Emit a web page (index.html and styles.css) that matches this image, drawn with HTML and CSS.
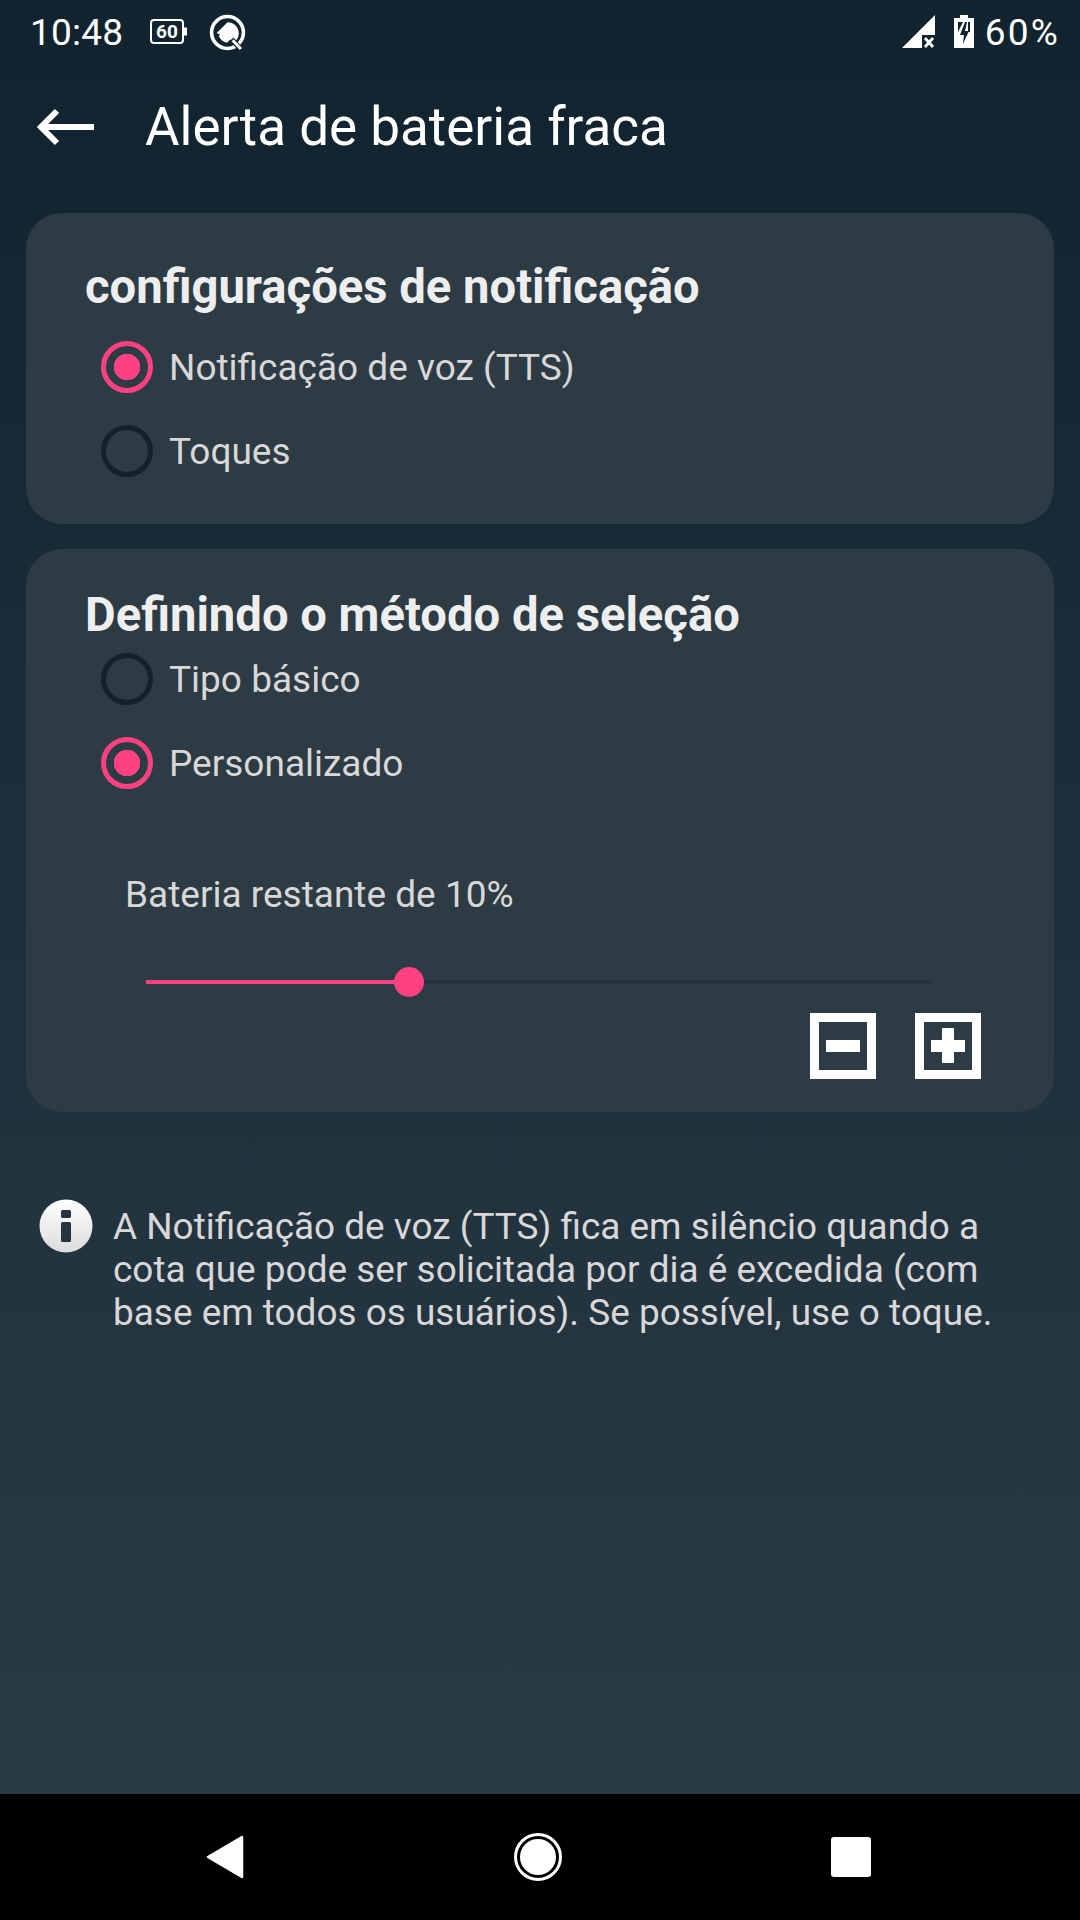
FILE: index.html
```html
<!DOCTYPE html>
<html lang="pt">
<head>
<meta charset="utf-8">
<title>Alerta de bateria fraca</title>
<link rel="stylesheet" href="styles.css">
</head>
<body>
<div class="screen">
  <main class="content">
    <header class="status">
      <div class="status-left">
        <span class="time">10:48</span>
        <svg class="ic-batt60" viewBox="0 0 38 26" width="38" height="26"><rect x="1" y="1" width="32" height="23" rx="3" fill="none" stroke="#fff" stroke-width="2"/><rect x="34" y="8.500" width="3" height="8" fill="#fff"/><text x="17" y="19" class="batt-text" text-anchor="middle">60</text></svg>
        <svg class="ic-q" viewBox="0 0 36 36" width="37" height="37"><circle cx="18" cy="18" r="15.500" fill="none" stroke="#fff" stroke-width="3.500"/><path d="M7.500 18.500 L18 8 A11 11 0 0 1 29 19 A11 11 0 0 1 25 27 Z" fill="#fff"/><path d="M9.500 21.500 L14.500 17 L21.500 24 L17.500 28 A11 11 0 0 1 9.500 21.500 Z" fill="#fff"/><path d="M22 24.500 L32 35.500" stroke="#10222f" stroke-width="5"/><path d="M23 25.500 L31 34" stroke="#fff" stroke-width="3"/></svg>
      </div>
      <div class="status-right">
        <svg viewBox="0 0 34 34" width="34" height="34"><path d="M0 33 L33 0 V20 H20 V33 Z" fill="#fff"/><path d="M23 23 L31 32 M31 23 L23 32" stroke="#fff" stroke-width="2.800"/></svg>
        <svg class="ic-charge" viewBox="0 0 20 34" width="20" height="34"><path d="M6 0 H14 V3 H20 V33 H0 V3 H6 Z" fill="#fff"/><path d="M4 7 H9 L4 17 Z M16 7 V17 H14 V7 Z" fill="#10222f"/><path d="M11 7 L6 20 H10 L9 29 L15 16 H11 L13 7 Z" fill="#10222f"/></svg>
        <span class="pct">60%</span>
      </div>
    </header>

    <div class="toolbar">
      <svg class="back" viewBox="0 0 60 40" width="60" height="40"><path d="M58 20 H7 M21 4 L5 20 L21 36" fill="none" stroke="#fff" stroke-width="6"/></svg>
      <h1 class="title">Alerta de bateria fraca</h1>
    </div>

    <section class="card card-notify">
      <h2 class="card-title">configurações de notificação</h2>
      <div class="radio-group">
        <div class="radio-row"><span class="radio on"></span><span class="radio-label">Notificação de voz (TTS)</span></div>
        <div class="radio-row"><span class="radio"></span><span class="radio-label">Toques</span></div>
      </div>
    </section>

    <section class="card card-method">
      <h2 class="card-title">Definindo o método de seleção</h2>
      <div class="radio-group">
        <div class="radio-row"><span class="radio"></span><span class="radio-label">Tipo básico</span></div>
        <div class="radio-row"><span class="radio on"></span><span class="radio-label">Personalizado</span></div>
      </div>
      <p class="remaining">Bateria restante de 10%</p>
      <div class="slider"><div class="slider-fill"></div><div class="slider-thumb"></div></div>
      <div class="steppers">
        <svg viewBox="0 0 66 66" width="66" height="66"><rect x="4.500" y="4.500" width="57" height="57" fill="none" stroke="#fff" stroke-width="9"/><rect x="16" y="27" width="34" height="12" fill="#fff"/></svg>
        <svg viewBox="0 0 66 66" width="66" height="66"><rect x="4.500" y="4.500" width="57" height="57" fill="none" stroke="#fff" stroke-width="9"/><path d="M16 27 H27 V15 H39 V27 H50 V39 H39 V50 H27 V39 H16 Z" fill="#fff"/></svg>
      </div>
    </section>

    <div class="info">
      <svg class="info-icon" viewBox="0 0 54 54" width="54" height="54"><defs><linearGradient id="ig" x1="0" y1="0" x2="0" y2="1"><stop offset="0" stop-color="#fff"/><stop offset="1" stop-color="#dcdcdc"/></linearGradient></defs><circle cx="27" cy="27" r="26.500" fill="url(#ig)"/><rect x="22" y="11" width="10" height="8" rx="1.500" fill="#25343f"/><rect x="22" y="23" width="10" height="20" rx="1.500" fill="#25343f"/></svg>
      <p class="info-text">A Notificação de voz (TTS) fica em silêncio quando a cota que pode ser solicitada por dia é excedida (com base em todos os usuários). Se possível, use o toque.</p>
    </div>
  </main>

  <nav class="navbar">
    <svg viewBox="0 0 38 44" width="38" height="44"><path d="M36 2 V42 L2 22 Z" fill="#fff" stroke="#fff" stroke-width="2.500" stroke-linejoin="round"/></svg>
    <svg viewBox="0 0 48 48" width="48" height="48"><circle cx="24" cy="24" r="22.500" fill="none" stroke="#fff" stroke-width="3"/><circle cx="24" cy="24" r="18" fill="#fff"/></svg>
    <span class="nav-square"></span>
  </nav>
</div>
</body>
</html>
```

FILE: styles.css
```css
* { box-sizing: border-box; }
html, body { margin: 0; padding: 0; }
body { width: 1080px; height: 1920px; font-family: Roboto, "Noto Sans", sans-serif; overflow: hidden; }
.screen { width: 1080px; height: 1920px; display: flex; flex-direction: column; }
.content { height: 1794px; background: linear-gradient(180deg, #10232e 0%, #2a3b46 100%); padding: 0 26px; display: flex; flex-direction: column; }
.status { height: 64px; margin: 0 -26px; padding: 0 20px 0 30px; display: flex; justify-content: space-between; align-items: center; color: #fff; }
.status-left, .status-right { display: flex; align-items: center; }
.time { font-size: 37px; font-weight: 400; letter-spacing: 0.2px; margin-right: 27px; }
.ic-batt60 { margin-right: 21px; }
.batt-text { font: 700 19px Roboto, sans-serif; fill: #fff; }
.ic-charge { margin: 0 11px 0 18px; }
.pct { font-size: 37px; font-weight: 400; letter-spacing: 2.2px; }
.toolbar { height: 122px; margin: 0 -26px; padding-left: 36px; display: flex; align-items: center; }
.back { margin-right: 49px; margin-top: 3px; }
.title { margin: 0; color: #fff; font-size: 53px; font-weight: 400; line-height: 1; margin-top: 4px; }
.card { margin-top: 27px; background: #2c3b44; border-radius: 36px; padding: 0 60px 0 59px; }
.card-notify { height: 311px; padding-top: 50px; }
.card-method { height: 563px; margin-top: 25px; padding-top: 42px; }
.card-title { margin: 0; font-size: 47.2px; font-weight: 700; color: #eeeeee; line-height: 48px; }
.radio-group { margin-left: 16px; margin-top: 30px; display: flex; flex-direction: column; gap: 32px; }
.card-method .radio-group { margin-top: 14px; }
.radio-row { display: flex; align-items: center; height: 52px; }
.radio { width: 52px; height: 52px; border-radius: 50%; border: 5px solid #15202a; margin-right: 16px; flex: none; }
.radio.on { border-color: #ff4081; background: radial-gradient(circle, #ff4081 0 13px, transparent 13.5px); }
.radio-label { font-size: 37px; color: #d9d7d7; }
.remaining { margin: 86px 0 0 40px; font-size: 37px; line-height: 40px; color: #d9d7d7; }
.slider { position: relative; margin: 65px 0 0 61px; width: 786px; height: 4px; background: #25323d; }
.slider-fill { height: 100%; width: 263px; background: #ff4081; }
.slider-thumb { position: absolute; left: 248px; top: -13px; width: 30px; height: 30px; border-radius: 50%; background: #ff4081; }
.steppers { display: flex; justify-content: flex-end; gap: 39px; margin: 29px 13px 0 0; }
.steppers svg { display: block; }
.info { margin: 86px 0 0 13px; display: flex; align-items: flex-start; gap: 20px; }
.info-icon { flex: none; margin-top: 1px; }
.info-text { margin: 7px 0 0; font-size: 36.95px; line-height: 43px; color: #d9d7d7; width: 900px; }
.navbar { height: 126px; background: #000; display: flex; align-items: center; justify-content: space-between; padding: 0 209px 0 206px; }
.nav-square { width: 40px; height: 40px; background: #fff; border-radius: 3px; }
```
